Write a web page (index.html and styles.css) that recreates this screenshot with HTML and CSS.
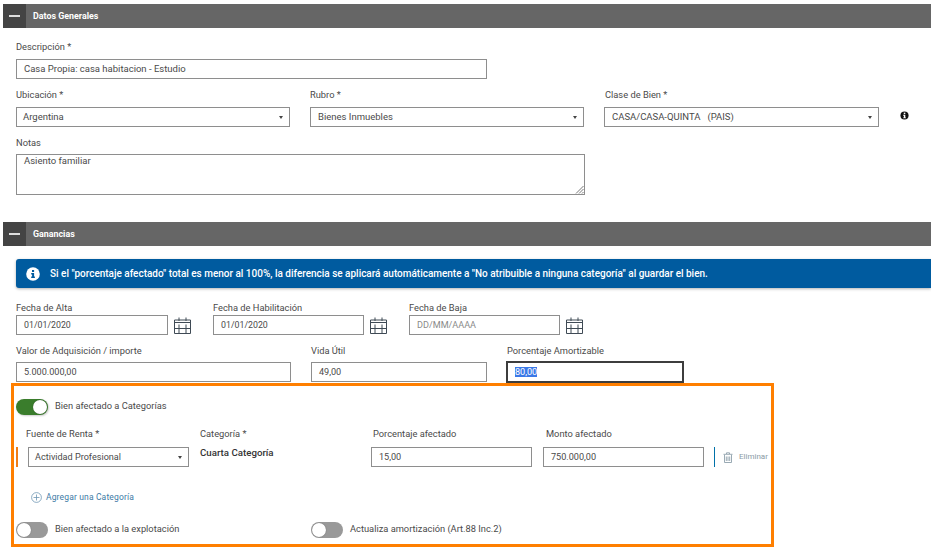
FILE: index.html
```html
<!DOCTYPE html>
<html lang="es">
<head>
<meta charset="utf-8">
<title>Datos Generales</title>
<link rel="stylesheet" href="styles.css">
</head>
<body>
<section class="section">
  <header class="bar"><span class="bar-toggle"><i></i></span><h2>Datos Generales</h2></header>
  <div class="body body-general">
    <div class="field w-desc">
      <label>Descripción *</label>
      <div class="input">Casa Propia: casa habitacion - Estudio</div>
    </div>
    <div class="row gap-20 top-7">
      <div class="field w-select">
        <label>Ubicación *</label>
        <div class="input select sel-tight">Argentina<b class="caret"></b></div>
      </div>
      <div class="field w-select">
        <label>Rubro *</label>
        <div class="input select">Bienes Inmuebles<b class="caret"></b></div>
      </div>
      <div class="field w-select w-clase">
        <label>Clase de Bien *</label>
        <div class="input select">CASA/CASA-QUINTA &nbsp; (PAIS)<b class="caret"></b></div>
      </div>
      <svg class="info-small" viewBox="0 0 10 10"><circle cx="5" cy="5" r="4.500" fill="#111"/><rect x="4.200" y="1.800" width="1.700" height="1.600" fill="#fff"/><path d="M3.500 4.200h2.400v2.900h.7v1H3.500v-1h.8V5.200h-.8z" fill="#fff"/></svg>
    </div>
    <div class="field w-notes">
      <label>Notas</label>
      <div class="textarea">Asiento familiar
        <svg class="grip" viewBox="0 0 9 9"><path d="M8.500 1 1 8.500M8.500 4 4 8.500M8.500 7 7 8.500" stroke="#555" stroke-width=".8" fill="none"/></svg>
      </div>
    </div>
  </div>
</section>

<section class="section section-gain">
  <header class="bar"><span class="bar-toggle"><i></i></span><h2>Ganancias</h2></header>
  <div class="body body-gain">
    <div class="alert">
      <svg class="alert-icon" viewBox="0 0 14 14"><circle cx="7" cy="7" r="6.800" fill="#fff"/><rect x="6" y="3" width="2.100" height="2" fill="#005b9f"/><path d="M5.200 6h2.900v3.600h.8V11H5.200V9.600h.9V7.400h-.9z" fill="#005b9f"/></svg>
      <span>Si el "porcentaje afectado" total es menor al 100%, la diferencia se aplicará automáticamente a "No atribuible a ninguna categoría" al guardar el bien.</span>
    </div>
    <div class="row dates">
      <div class="date date-first">
        <label>Fecha de Alta</label>
        <div class="date-line"><div class="input w-date">01/01/2020</div>
          <svg class="cal" viewBox="0 0 17 17"><use href="#cal"/></svg></div>
      </div>
      <div class="date">
        <label>Fecha de Habilitación</label>
        <div class="date-line"><div class="input w-date">01/01/2020</div>
          <svg class="cal" viewBox="0 0 17 17"><use href="#cal"/></svg></div>
      </div>
      <div class="date">
        <label>Fecha de Baja</label>
        <div class="date-line"><div class="input w-date placeholder">DD/MM/AAAA</div>
          <svg class="cal" viewBox="0 0 17 17"><use href="#cal"/></svg></div>
      </div>
    </div>
    <div class="row values">
      <div class="field w-valor"><label>Valor de Adquisición / importe</label><div class="input num">5.000.000,00</div></div>
      <div class="field w-vida"><label>Vida Útil</label><div class="input num">49,00</div></div>
      <div class="field w-porc"><label>Porcentaje Amortizable</label><div class="input num focused"><mark>80,00</mark></div></div>
    </div>
  </div>
  <div class="highlight">
    <div class="switch-row"><span class="switch on"><i></i></span><span class="switch-text">Bien afectado a Categorías</span></div>
    <div class="cat-grid">
      <label class="c-fuente">Fuente de Renta *</label>
      <label class="c-cat">Categoría *</label>
      <label class="c-porc">Porcentaje afectado</label>
      <label class="c-monto">Monto afectado</label>
      <span class="marker"></span>
      <div class="input select sel-tight num">Actividad Profesional<b class="caret"></b></div>
      <strong class="cat-value">Cuarta Categoría</strong>
      <div class="input num in-porc">15,00</div>
      <div class="input num in-monto">750.000,00</div>
      <div class="remove">
        <svg class="trash" viewBox="0 0 10 11"><path d="M.5 2.300h9M3.500 2V.8h3V2M1.500 2.800V10.500h7V2.800M3.300 4.500v4.500M5 4.500v4.500M6.700 4.500v4.500" fill="none" stroke="#8fa0ab" stroke-width=".9"/></svg>
        <span>Eliminar</span>
      </div>
    </div>
    <div class="add">
      <svg class="plus" viewBox="0 0 11 11"><circle cx="5.500" cy="5.500" r="4.900" fill="none" stroke="#6f97b4" stroke-width=".8"/><path d="M5.500 2.500v6M2.500 5.500h6" stroke="#6f97b4" stroke-width=".8"/></svg>
      <span>Agregar una Categoría</span>
    </div>
    <div class="row bottom-switches">
      <div class="switch-row sw-a"><span class="switch"><i></i></span><span class="switch-text">Bien afectado a la explotación</span></div>
      <div class="switch-row"><span class="switch"><i></i></span><span class="switch-text">Actualiza amortización (Art.88 Inc.2)</span></div>
    </div>
  </div>
</section>

<svg class="defs" width="0" height="0">
  <symbol id="cal" viewBox="0 0 17 17">
    <path d="M.5 3h16v13.500H.5zM.5 5.500h16M5 .5V4M12 .5V4M.5 11.500h16M5 7.500v9M12 7.500v9" fill="none" stroke="#3f4a55" stroke-width="1"/>
  </symbol>
</svg>
</body>
</html>
```
FILE: styles.css
```css
* { box-sizing: border-box; }
html, body { margin: 0; padding: 0; }
body {
  width: 931px;
  height: 548px;
  overflow: hidden;
  background: #fff;
  font-family: Roboto, "Liberation Sans", sans-serif;
  font-size: 9.300px;
  line-height: 12px;
  color: #333;
  padding: 4px 0 0 3px;
}
label { display: block; color: #4a4a4a; height: 13px; line-height: 13px; }
.section-gain { margin-top: 27px; }
.bar {
  display: flex;
  align-items: center;
  height: 24px;
  background: #666;
  color: #fff;
}
.bar h2 { margin: 0 0 0 7px; font-size: 8.900px; font-weight: 700; }
.bar-toggle {
  width: 23px;
  height: 24px;
  background: #444;
  display: flex;
  align-items: center;
  justify-content: center;
}
.bar-toggle i { display: block; width: 11px; height: 1.500px; background: #ddd; }
.body { padding-left: 13px; }
.body-general { padding-top: 12px; }
.row { display: flex; }
.gap-20 { gap: 20px; }
.top-7 { margin-top: 9px; }
.field label { margin-bottom: 6px; }
.w-desc { width: 471px; }
.w-select { width: 274px; }
.w-clase { width: 275px; }
.w-clase label { margin-left: 1px; }
.w-notes { width: 569px; margin-top: 9px; }
.w-notes label { margin-bottom: 5px; }
.input {
  position: relative;
  height: 20px;
  line-height: 18px;
  border: 1px solid #8e8e8e;
  padding: 0 7px;
  background: #fff;
  color: #4a4a4a;
  font-size: 9.500px;
}
.num { font-size: 9.100px; }
.select { padding-right: 16px; }
.sel-tight { padding-left: 6px; }
.caret {
  position: absolute;
  right: 6px;
  top: 8px;
  width: 0;
  height: 0;
  border: 2.500px solid transparent;
  border-top: 3px solid #444;
  border-bottom: 0;
}
.info-small { width: 9px; height: 9px; margin: 23px 0 0 1px; flex: none; }
.textarea {
  position: relative;
  height: 41px;
  border: 1px solid #8e8e8e;
  padding: 0 7px;
  line-height: 12px;
  color: #4a4a4a;
  font-size: 9.500px;
}
.grip { position: absolute; right: 0; bottom: 0; width: 9px; height: 9px; }
.body-gain { padding-top: 13px; }
.alert {
  display: flex;
  align-items: center;
  gap: 10px;
  height: 29px;
  padding-left: 10px;
  background: #005b9f;
  color: #fff;
  border-radius: 3px 0 0 3px;
  box-shadow: 0 1px 3px rgba(0, 0, 0, .3);
  font-weight: 500;
  font-size: 10px;
  letter-spacing: -.012px;
}
.alert-icon { width: 14px; height: 14px; flex: none; }
.dates { margin-top: 13px; gap: 45px; }
.date { width: 151px; }
.date-first { width: 152px; }
.date label { margin-bottom: 1px; }
.date-line { display: flex; align-items: center; gap: 6px; margin-right: -24px; }
.w-date { width: 151px; flex: none; font-size: 8.800px; }
.date-first .w-date { width: 152px; }
.placeholder { color: #8a8a8a; font-size: 9.100px; }
.cal { width: 17px; height: 17px; flex: none; }
.values { margin-top: 9px; gap: 20px; height: 39px; }
.values .field label { margin-bottom: 5px; }
.w-valor { width: 275px; }
.w-vida { width: 176px; }
.w-porc { width: 178px; margin-left: -1px; }
.w-porc label { margin-left: 1px; }
.focused {
  height: 22px;
  margin-top: -1px;
  border: 2px solid #3d3d3d;
  padding: 0 7px;
  line-height: 18px;
}
mark { background: #3b78e7; color: #fff; }
.highlight {
  position: relative;
  width: 763px;
  height: 164px;
  margin: 0 0 0 8px;
  padding: 13px 2px 0 2px;
  border: 3px solid #ff7f00;
}
.switch-row { display: flex; align-items: center; gap: 7px; color: #4a4a4a; }
.switch-text { padding-bottom: 2px; }
.switch {
  position: relative;
  display: block;
  width: 32px;
  height: 16px;
  border-radius: 8px;
  background: #999;
  flex: none;
}
.switch i {
  position: absolute;
  left: 1px;
  top: 1px;
  width: 14px;
  height: 14px;
  border-radius: 50%;
  background: #fff;
  box-shadow: 0 0 1px rgba(0, 0, 0, .5);
}
.switch.on { background: #3a7d2c; box-shadow: 1px 1px 2px rgba(0, 0, 0, .2); }
.switch.on i { left: auto; right: 1px; }
.cat-grid {
  display: grid;
  grid-template-columns: 2px 171px 182px 161px 172px 64px;
  margin-top: 12px;
}
.cat-grid label { align-self: start; }
.c-fuente { grid-column: 1 / 3; margin-left: 10px; }
.c-cat { grid-column: 3; margin-left: 11px; }
.c-porc { grid-column: 4; margin-left: 2px; }
.c-monto { grid-column: 5; margin-left: 14px; }
.marker { background: #ef7d18; height: 20px; margin-top: 7px; grid-row: 2; }
.cat-grid > .input { margin-top: 7px; }
.cat-grid > .select { grid-column: 2; margin-left: 10px; width: 161px; }
.in-porc { grid-column: 4; width: 161px; }
.in-monto { grid-column: 5; width: 161px; margin-left: 11px; }
.cat-value { font-weight: 500; font-size: 9.700px; color: #333; margin: 7px 0 0 11px; grid-column: 3; }
.remove {
  display: flex;
  align-items: center;
  gap: 6px;
  height: 20px;
  margin: 7px 0 0 10px;
  padding-left: 8px;
  border-left: 1px solid #0071a9;
  color: #8a9aa5;
  font-size: 8px;
  white-space: nowrap;
  grid-column: 6;
}
.trash { width: 10px; height: 11px; flex: none; }
.add {
  display: flex;
  align-items: center;
  gap: 4px;
  margin: 24px 0 0 15px;
  color: #3d7ba6;
  font-size: 8.500px;
  letter-spacing: .15px;
}
.plus { width: 11px; height: 11px; flex: none; }
.bottom-switches { margin-top: 19px; }
.sw-a { width: 295px; }
.defs { position: absolute; }
```
